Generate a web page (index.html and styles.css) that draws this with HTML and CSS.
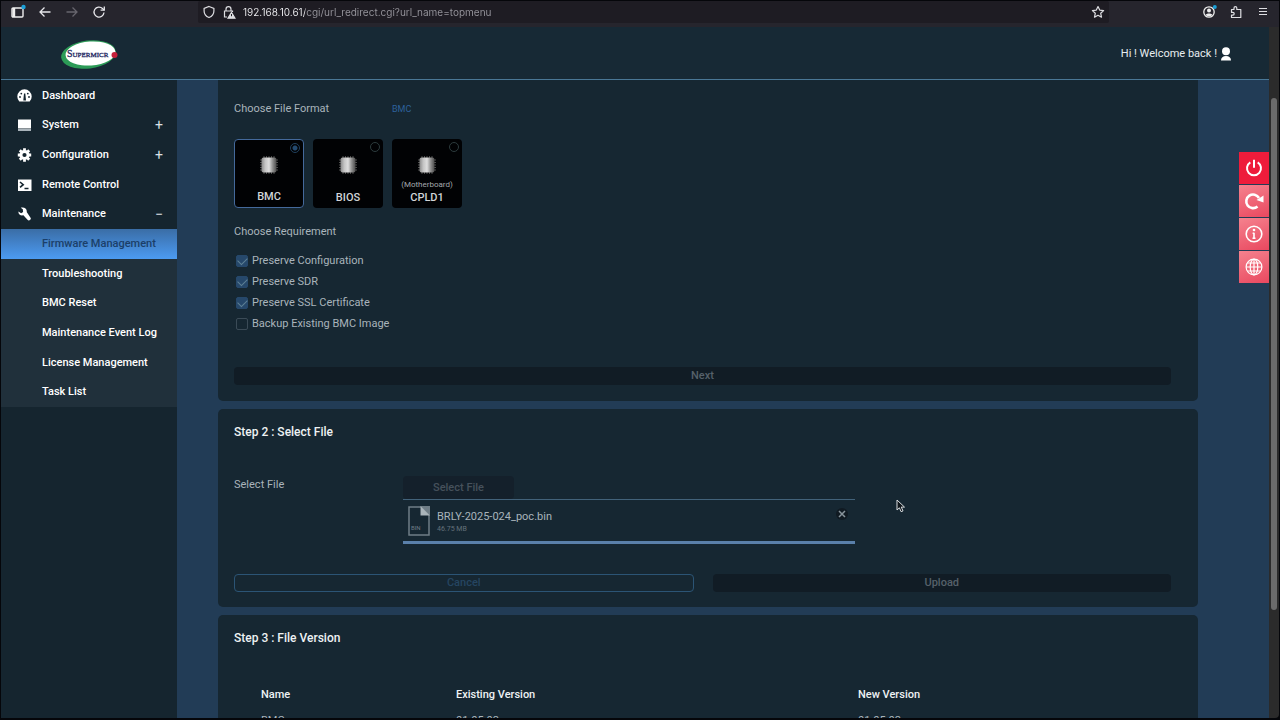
FILE: index.html
```
<!DOCTYPE html>
<html lang="en">

<head>
    <meta charset="UTF-8">
    <meta name="viewport" content="width=device-width, initial-scale=1.0">
    <title>Firmware Management</title>
    <link rel="stylesheet" href="styles.css">
</head>

<body>
    <!-- shared icons -->
    <svg class="sprite" aria-hidden="true">
        <defs>
            <linearGradient id="metal">
                <stop offset="0" stop-color="#8a8a8a" />
                <stop offset="0.25" stop-color="#c4c4c4" />
                <stop offset="0.5" stop-color="#dedede" />
                <stop offset="0.75" stop-color="#8e8e8e" />
                <stop offset="1" stop-color="#4c4c4c" />
            </linearGradient>
        </defs>
        <symbol id="chip" viewBox="0 0 18 18">
            <path d="M4 0v18M6.500 0v18M9 0v18M11.500 0v18M14 0v18M0 4h18M0 6.500h18M0 9h18M0 11.500h18M0 14h18" stroke="#4e4e4e" stroke-width="1" />
            <rect x="1.500" y="1.500" width="15" height="15" rx="2" fill="url(#metal)" />
        </symbol>
    </svg>

    <div class="toolbar">
        <div class="tools">
            <button aria-label="Sidebar"><svg width="16" height="16" viewBox="0 0 16 16"><rect x="2" y="4" width="11" height="9" rx="1" fill="none" stroke="#eee" stroke-width="1.400" /><path d="M2.500 4h2.700v9H2.500z" fill="#eee" /><circle cx="13.500" cy="3" r="2.200" fill="#1ba0d8" /></svg></button>
            <button aria-label="Back"><svg width="14" height="14" viewBox="0 0 14 14" fill="none" stroke="#e6e6ea" stroke-width="1.300"><path d="M12.500 7H2M6.500 2.500L2 7l4.500 4.500" /></svg></button>
            <button aria-label="Forward" disabled><svg width="14" height="14" viewBox="0 0 14 14" fill="none" stroke="#67656d" stroke-width="1.300"><path d="M1.500 7H12M7.500 2.500L12 7l-4.500 4.500" /></svg></button>
            <button aria-label="Reload"><svg width="14" height="14" viewBox="0 0 14 14" fill="none" stroke="#e6e6ea" stroke-width="1.300"><path d="M12 7.500A5 5 0 1 1 10.500 3.500L12 5" /><path d="M12.300 1.500v3.700H8.600" /></svg></button>
        </div>
        <div class="urlbar">
            <svg width="14" height="14" viewBox="0 0 14 14" fill="none" stroke="#dedee2" stroke-width="1.200"><path d="M7 1.500l4.900 1.900v2.500c0 3-1.700 5.300-4.900 6.600-3.200-1.300-4.900-3.600-4.900-6.600V3.400z" /></svg>
            <svg class="lock" width="14" height="14" viewBox="0 0 14 14" fill="none" stroke="#dedee2" stroke-width="1.200"><path d="M5 12H2.500V6h8v1M4 6V4.200a2.500 2.500 0 0 1 5 0V6" /><path d="M9.500 7.500l3.500 5.700H6z" fill="#dedee2" /><path d="M9.500 9v2.200" stroke="#1e1c23" stroke-width="1" /></svg>
            <input type="text" aria-label="Address" value="192.168.10.61/cgi/url_redirect.cgi?url_name=topmenu">
            <button aria-label="Bookmark"><svg width="14" height="14" viewBox="0 0 14 14" fill="none" stroke="#dedee2" stroke-width="1.200" stroke-linejoin="round"><path d="M7 1.500l1.700 3.600 3.900.5-2.900 2.700.8 3.900L7 10.300l-3.500 1.900.8-3.900L1.400 5.600l3.900-.5z" /></svg></button>
        </div>
        <div class="tools">
            <button aria-label="Account"><svg width="16" height="16" viewBox="0 0 16 16"><circle cx="8" cy="8" r="5.200" fill="none" stroke="#eee" stroke-width="1.300" /><circle cx="8" cy="6.500" r="2" fill="#eee" /><path d="M4.700 11c.6-2 6-2 6.600 0-1.800 1.800-4.800 1.800-6.600 0z" fill="#eee" /><circle cx="13.800" cy="3" r="2" fill="#1ba0d8" /></svg></button>
            <button aria-label="Extensions"><svg width="14" height="14" viewBox="0 0 14 14" fill="none" stroke="#dedee2" stroke-width="1.200" stroke-linejoin="round"><path d="M2.500 4.500H5V3a1.400 1.400 0 0 1 2.800 0v1.500h4v8H2.500v-2.300h1.300a1.400 1.400 0 0 0 0-2.800H2.500z" /></svg></button>
            <button aria-label="Menu"><svg width="12" height="12" viewBox="0 0 12 12" stroke="#dedee2" stroke-width="1"><path d="M2 2.500h8M2 5.500h8M2 8.500h8" /></svg></button>
        </div>
    </div>

    <div class="window">
        <div class="site">
            <header>
                <svg class="logo" width="60" height="34" viewBox="0 0 60 34" role="img" aria-label="Supermicro">
                    <ellipse cx="28.500" cy="17.500" rx="27.500" ry="14" fill="#2c9b57" transform="rotate(-7 28.500 17.500)" />
                    <ellipse cx="30.500" cy="16.500" rx="25" ry="12" fill="#fff" transform="rotate(-4 30.500 16.500)" />
                    <text x="7" y="20"><tspan class="cap">S</tspan>UPERMICR</text>
                    <circle cx="54.500" cy="18" r="3" fill="#c5203a" />
                </svg>
                <a href="#" class="user">Hi ! Welcome back !
                    <svg width="10" height="14" viewBox="0 0 10 14" fill="#fff"><circle cx="5" cy="4.300" r="4" /><path d="M0 13.500c0-3 2-4.500 5-4.500s5 1.500 5 4.500z" /></svg>
                </a>
            </header>

            <div class="body">
                <nav>
                    <ul class="menu">
                        <li><a href="#"><svg width="15" height="14" viewBox="0 0 15 14"><path d="M2.300 12.500A7.200 7.200 0 1 1 12.700 12.500z" fill="#fff" /><path d="M7 4.500h1.300l.7 7H6.300z" fill="#15252f" /><circle cx="3" cy="8" r=".9" fill="#15252f" /><circle cx="4.300" cy="4.600" r=".9" fill="#15252f" /><circle cx="10.800" cy="4.600" r=".9" fill="#15252f" /><circle cx="12" cy="8" r=".9" fill="#15252f" /></svg>Dashboard</a></li>
                        <li><button><svg width="15" height="14" viewBox="0 0 15 14"><path d="M1 1.500h13v9H1z" fill="#fff" /><path d="M1 11h13v2H1z" fill="#a9b3ba" /></svg>System<span class="sign">+</span></button></li>
                        <li><button><svg width="15" height="14" viewBox="0 0 15 14"><circle cx="7.500" cy="7" r="3.600" fill="none" stroke="#fff" stroke-width="3" /><path d="M7.500 .3v2.500M7.500 11.200v2.500M.8 7h2.500M11.700 7h2.500M2.800 2.300l1.700 1.700M10.500 10l1.700 1.700M12.200 2.300L10.500 4M4.500 10l-1.700 1.700" stroke="#fff" stroke-width="2.800" /></svg>Configuration<span class="sign">+</span></button></li>
                        <li><a href="#"><svg width="15" height="14" viewBox="0 0 15 14"><path d="M1 1.500h13.500v11.500H1z" fill="#fff" /><path d="M3 4l3.200 2.700L3 9.400M7.500 10.500h4" fill="none" stroke="#15252f" stroke-width="1.600" /></svg>Remote Control</a></li>
                        <li class="open">
                            <button><svg width="15" height="14" viewBox="0 0 15 14" fill="#fff"><path d="M1.500 4.500l2.600 1.700 2-1.300L5.800 2.300 3.800.8c3.400-1 6.600 1 5.900 4.300l4 5.800c.8 1.800-2 3.500-3.200 1.800L6.400 8.300C3.500 9 1 7.200 1.500 4.500z" /></svg>Maintenance<span class="sign">&minus;</span></button>
                            <ul class="submenu">
                                <li><a href="#" class="active">Firmware Management</a></li>
                                <li><a href="#">Troubleshooting</a></li>
                                <li><a href="#">BMC Reset</a></li>
                                <li><a href="#">Maintenance Event Log</a></li>
                                <li><a href="#">License Management</a></li>
                                <li><a href="#">Task List</a></li>
                            </ul>
                        </li>
                    </ul>
                </nav>

                <main>
                    <section class="card step1">
                        <div class="row">
                            <span class="label">Choose File Format</span>
                            <span class="format">BMC</span>
                        </div>
                        <div class="tiles">
                            <label class="tile selected">
                                <input type="radio" name="format" checked disabled>
                                <svg width="18" height="18"><use href="#chip" /></svg>
                                <b>BMC</b>
                            </label>
                            <label class="tile">
                                <input type="radio" name="format" disabled>
                                <svg width="18" height="18"><use href="#chip" /></svg>
                                <b>BIOS</b>
                            </label>
                            <label class="tile">
                                <input type="radio" name="format" disabled>
                                <svg width="18" height="18"><use href="#chip" /></svg>
                                <small>(Motherboard)</small>
                                <b>CPLD1</b>
                            </label>
                        </div>
                        <div class="row">Choose Requirement</div>
                        <div class="checks">
                            <label><input type="checkbox" checked disabled>Preserve Configuration</label>
                            <label><input type="checkbox" checked disabled>Preserve SDR</label>
                            <label><input type="checkbox" checked disabled>Preserve SSL Certificate</label>
                            <label><input type="checkbox" disabled>Backup Existing BMC Image</label>
                        </div>
                        <button class="btn" disabled>Next</button>
                    </section>

                    <section class="card step2">
                        <h2>Step 2 : Select File</h2>
                        <div class="select-row">
                            <span class="select-label">Select File</span>
                            <div class="upload">
                                <button class="btn pick" disabled>Select File</button>
                                <div class="file">
                                    <svg width="22" height="30" viewBox="0 0 22 30"><path d="M1 1h13l7 7v21H1z" fill="none" stroke="#6f7d86" stroke-width="1.500" /><path d="M12.500 0H22v9.500z" fill="#6f7d86" /><path d="M12.500 0v9.500H22z" fill="#aab4ba" /><text x="3" y="24">BIN</text></svg>
                                    <div class="info">
                                        <span>BRLY-2025-024_poc.bin</span>
                                        <small>46.75 MB</small>
                                    </div>
                                    <button class="remove" aria-label="Remove file"><svg width="8" height="8" viewBox="0 0 8 8" stroke="#87939b" stroke-width="1.500"><path d="M1 1l6 6M7 1L1 7" /></svg></button>
                                </div>
                                <progress value="100" max="100" aria-label="Upload progress"></progress>
                            </div>
                        </div>
                        <div class="actions">
                            <button class="btn cancel" disabled>Cancel</button>
                            <button class="btn" disabled>Upload</button>
                        </div>
                    </section>

                    <section class="card step3">
                        <h2>Step 3 : File Version</h2>
                        <table>
                            <thead>
                                <tr>
                                    <th class="name">Name</th>
                                    <th class="existing">Existing Version</th>
                                    <th>New Version</th>
                                </tr>
                            </thead>
                            <tbody>
                                <tr>
                                    <td>BMC</td>
                                    <td>01.05.02</td>
                                    <td>01.05.02</td>
                                </tr>
                            </tbody>
                        </table>
                    </section>
                </main>
            </div>

            <div class="quick">
                <button class="power" aria-label="Power"><svg width="18" height="18" viewBox="0 0 18 18" fill="none" stroke="#fff" stroke-width="2"><path d="M5.300 3.300a7 7 0 1 0 7.400 0M9 .8v8" /></svg></button>
                <button aria-label="Reset"><svg width="20" height="18" viewBox="0 0 20 18" fill="none" stroke="#fff" stroke-width="2.600"><path d="M13.500 14.500A6.800 6.800 0 1 1 15 6" /><path d="M19.500 3.500v7l-7-2.500z" fill="#fff" stroke="none" /></svg></button>
                <button aria-label="Information"><svg width="18" height="18" viewBox="0 0 18 18" fill="none" stroke="#fff"><circle cx="9" cy="9" r="7.800" stroke-width="1.600" /><path d="M9 7.800v5.700M7.600 8.200H9M7.500 13.200h3" stroke-width="1.600" /><circle cx="9" cy="5" r="1.300" fill="#fff" stroke="none" /></svg></button>
                <button aria-label="Language"><svg width="18" height="18" viewBox="0 0 18 18" fill="none" stroke="#fff" stroke-width="1.200"><circle cx="9" cy="9" r="7.900" /><ellipse cx="9" cy="9" rx="3.800" ry="7.900" /><path d="M9 1v16M1 9h16M2.300 5h13.400M2.300 13h13.400" /></svg></button>
            </div>
        </div>
        <div class="scrollbar"><div class="thumb"></div></div>
    </div>

    <svg class="cursor" width="10" height="14" viewBox="0 0 10 14"><path d="M1 1v10l2.400-2.200 1.700 3.900 1.900-.8-1.700-3.800H8.500z" fill="#10161b" stroke="#d8dcdf" /></svg>
</body>

</html>
```
FILE: styles.css
```
* {
    margin: 0;
    padding: 0;
    box-sizing: border-box;
}

body {
    display: flex;
    flex-direction: column;
    height: 100vh;
    padding: 1px 1px 2px;
    overflow: hidden;
    background: #05060a;
    color: #a9b4bb;
    font-family: Roboto, sans-serif;
    font-size: 11px;
    line-height: 14px;
}

button,
input {
    border: 0;
    background: none;
    color: inherit;
    font: inherit;
}

a {
    color: inherit;
    text-decoration: none;
}

ul {
    list-style: none;
}

.sprite {
    position: absolute;
    width: 0;
    height: 0;
}

/* browser toolbar */
.toolbar {
    display: flex;
    flex: none;
    align-items: center;
    justify-content: space-between;
    gap: 86px;
    height: 26px;
    padding: 0 3px 4px;
    background: #26252d;
}

.tools {
    display: flex;
}

.tools button {
    display: flex;
    align-items: center;
    justify-content: center;
    width: 27px;
    height: 22px;
}

.urlbar {
    display: flex;
    flex: 1;
    align-items: center;
    height: 22px;
    padding: 0 4px;
    border-radius: 2px;
    background: #1e1c23;
    font-family: Inter, sans-serif;
    font-size: 10px;
}

.urlbar .lock {
    margin: 0 7px 0 6px;
}

/* host is brighter than the path */
.urlbar input {
    flex: 1;
    background: linear-gradient(to right, #f2f2f5 62px, #97969d 62px);
    -webkit-background-clip: text;
    background-clip: text;
    -webkit-text-fill-color: transparent;
}

.urlbar button {
    display: flex;
}

/* page */
.window {
    display: flex;
    flex: 1;
    min-height: 0;
}

.site {
    position: relative;
    display: flex;
    flex: 1;
    flex-direction: column;
    background: #223c56;
}

.scrollbar {
    width: 10px;
    padding: 71px 2px 108px;
    border-radius: 0 0 4px 0;
    background: #2b2b2b;
}

.thumb {
    height: 100%;
    border-radius: 3px;
    background: #6b6b6b;
}

header {
    display: flex;
    flex: none;
    align-items: center;
    justify-content: space-between;
    height: 53px;
    padding: 1px 38px 0 59px;
    border-bottom: 1px solid #4a7796;
    background: #172935;
}

.logo text {
    fill: #1d2660;
    stroke: #1d2660;
    stroke-width: .3px;
    font-family: "Liberation Serif", serif;
    font-size: 7px;
}

.logo .cap {
    font-size: 10px;
}

.user {
    display: flex;
    align-items: center;
    gap: 4px;
    color: #e8edf0;
}

.body {
    display: flex;
    flex: 1;
    min-height: 0;
}

nav {
    flex: none;
    width: 176px;
    background: #15252f;
}

.menu {
    display: grid;
    grid-template-rows: repeat(11, 1fr);
    min-height: 327px;
    padding-top: 1px;
    color: #fff;
    font-weight: 500;
}

.menu a,
.menu button {
    display: flex;
    align-items: center;
    gap: 10px;
    width: 100%;
    height: 100%;
    padding: 0 14px 0 16px;
}

.sign {
    margin-left: auto;
    color: #dbe1e5;
    font-size: 14px;
    font-weight: 400;
}

.menu .open,
.submenu {
    display: grid;
    grid-row: span 7;
    grid-template-rows: subgrid;
}

.menu .submenu {
    grid-row: span 6;
    background: #20303b;
}

.menu .submenu a {
    padding-left: 41px;
}

.submenu .active {
    background: linear-gradient(#3a6da6, #4c9bf2);
    color: #1b3f69;
}

main {
    display: flex;
    flex: 1;
    flex-direction: column;
    gap: 8px;
    min-width: 0;
    padding: 0 71px 0 41px;
    overflow: hidden;
}

.card {
    flex: none;
    padding: 0 27px 15px 16px;
    border-radius: 5px;
    background: #162732;
}

.card h2 {
    color: #eef2f4;
    font-size: 12px;
    font-weight: 500;
    line-height: 16px;
}

.btn {
    width: 100%;
    height: 18px;
    border-radius: 4px;
    background: #111c25;
    color: #56616a;
    font-weight: 500;
}

/* step 1 */
.step1 {
    padding-top: 22px;
    padding-bottom: 16px;
    border-radius: 0 0 5px 5px;
}

.row {
    display: flex;
}

.label {
    width: 158px;
}

.format {
    color: #2d619b;
    font-size: 9px;
}

.tiles {
    display: flex;
    gap: 9px;
    margin: 23px 0 17px;
}

.tile {
    position: relative;
    display: flex;
    flex-direction: column;
    align-items: center;
    width: 70px;
    height: 69px;
    padding: 17px 0 4px;
    border-radius: 4px;
    background: #010204;
    color: #d2d5d8;
}

.tile.selected {
    padding-top: 16px;
    border: 1px solid #44699b;
}

.tile b {
    margin-top: auto;
    font-weight: 500;
    line-height: 13px;
}

.tile small {
    margin-top: 5px;
    color: #a4a8ac;
    font-size: 8px;
    line-height: 12px;
}

.tile input {
    position: absolute;
    top: 3px;
    right: 3px;
    width: 10px;
    height: 10px;
    border: 1px solid #2c3b3d;
    border-radius: 50%;
    appearance: none;
}

.tile input:checked {
    border-color: #1f3f5c;
    background: radial-gradient(#234a70 2px, transparent 3px);
}

.checks {
    display: flex;
    flex-direction: column;
    margin: 11px 0 33px 2px;
}

.checks label {
    display: flex;
    align-items: center;
    gap: 4px;
    height: 21px;
}

.checks input {
    position: relative;
    width: 12px;
    height: 12px;
    border: 1px solid #3b4b57;
    border-radius: 2px;
    appearance: none;
}

.checks input:checked {
    border-color: #26486b;
    background: #26486b;
}

.checks input:checked::after {
    content: "";
    position: absolute;
    top: 1px;
    left: 1px;
    width: 8px;
    height: 5px;
    border: solid #5e8095;
    border-width: 0 0 1px 1px;
    transform: rotate(-45deg);
}

/* step 2 */
.step2 {
    padding-top: 15px;
}

.select-row {
    display: flex;
    margin: 36px 0 30px;
}

.select-label {
    width: 169px;
    padding-top: 2px;
}

.upload {
    width: 452px;
}

.pick {
    display: block;
    width: 111px;
    height: 23px;
    background: #14202b;
    color: #46515b;
}

.file {
    display: flex;
    align-items: flex-start;
    height: 42px;
    padding: 6px 7px 0 5px;
    border-top: 1px solid #42627a;
}

.file text {
    fill: #6f7d86;
    font-size: 6px;
}

.info {
    display: flex;
    flex: 1;
    flex-direction: column;
    padding: 4px 0 0 7px;
}

.info small {
    color: #65727b;
    font-size: 7px;
    line-height: 10px;
}

.remove {
    display: flex;
    align-items: center;
    justify-content: center;
    width: 12px;
    height: 12px;
    margin-top: 2px;
    border-radius: 50%;
    background: #101a22;
}

progress {
    display: block;
    width: 100%;
    height: 3px;
    appearance: none;
}

progress::-webkit-progress-bar {
    background: #12304f;
}

progress::-webkit-progress-value {
    background: #5a80aa;
}

.actions {
    display: flex;
    gap: 19px;
}

.cancel {
    border: 1px solid #2b5475;
    background: none;
    color: #254561;
}

/* step 3 */
.step3 {
    padding-top: 15px;
}

table {
    width: 100%;
    margin-top: 35px;
    border-collapse: collapse;
    table-layout: fixed;
    text-align: left;
}

th {
    height: 27px;
    color: #eef2f4;
    font-weight: 500;
}

td {
    height: 25px;
}

th:first-child,
td:first-child {
    padding-left: 27px;
}

.name {
    width: 222px;
}

.existing {
    width: 402px;
}

/* quick actions on the right edge */
.quick {
    position: absolute;
    top: 125px;
    right: 0;
    display: flex;
    flex-direction: column;
    gap: 1px;
}

.quick button {
    display: flex;
    align-items: center;
    justify-content: center;
    width: 30px;
    height: 32px;
    background: linear-gradient(160deg, #f5828e, #e9485f);
}

.quick .power {
    background: #ee1c3b;
}

.cursor {
    position: absolute;
    top: 499px;
    left: 896px;
}
```
